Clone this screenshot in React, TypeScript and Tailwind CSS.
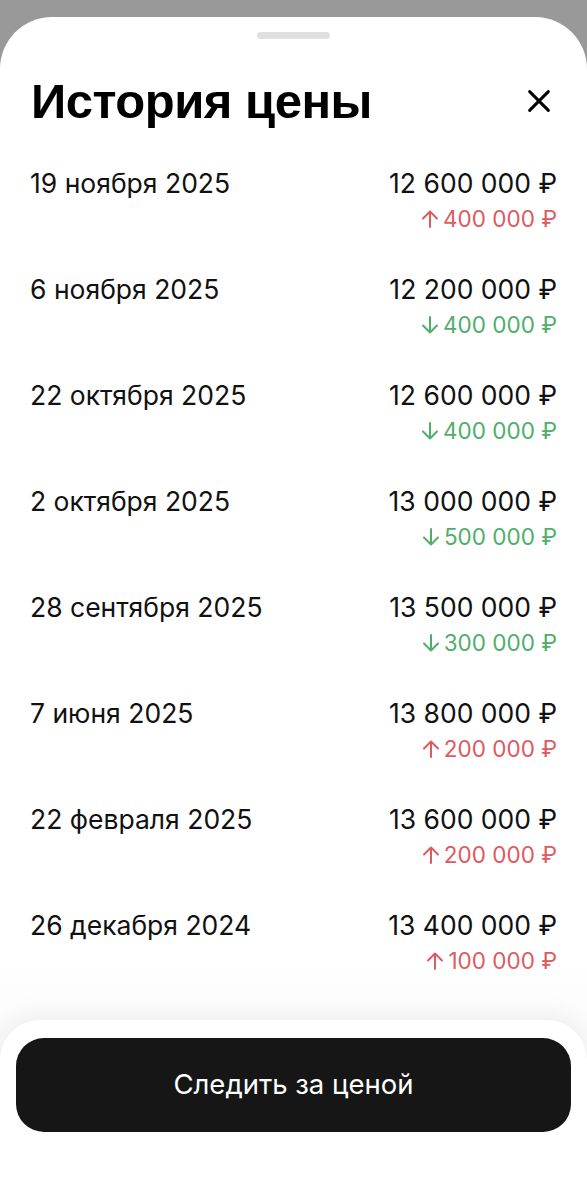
import React from 'react';

type Entry = {
  date: string;
  price: string;
  delta: string;
  up: boolean;
};

const history: Entry[] = [
  { date: '19 ноября 2025', price: '12 600 000 ₽', delta: '400 000 ₽', up: true },
  { date: '6 ноября 2025', price: '12 200 000 ₽', delta: '400 000 ₽', up: false },
  { date: '22 октября 2025', price: '12 600 000 ₽', delta: '400 000 ₽', up: false },
  { date: '2 октября 2025', price: '13 000 000 ₽', delta: '500 000 ₽', up: false },
  { date: '28 сентября 2025', price: '13 500 000 ₽', delta: '300 000 ₽', up: false },
  { date: '7 июня 2025', price: '13 800 000 ₽', delta: '200 000 ₽', up: true },
  { date: '22 февраля 2025', price: '13 600 000 ₽', delta: '200 000 ₽', up: true },
  { date: '26 декабря 2024', price: '13 400 000 ₽', delta: '100 000 ₽', up: true },
];

function Arrow({ up }: { up: boolean }) {
  return (
    <svg
      viewBox="0 0 20 20"
      className={up ? 'w-[20px] h-[20px]' : 'w-[20px] h-[20px] rotate-180'}
      fill="none"
      stroke="currentColor"
      strokeWidth={2}
      strokeLinecap="round"
      strokeLinejoin="round"
    >
      <path d="M10 18V2.5M3 9.5L10 2.5L17 9.5" />
    </svg>
  );
}

function Row({ entry }: { entry: Entry }) {
  return (
    <div className="flex justify-between h-[106px]">
      <div className="text-[26.5px] leading-[34px] text-[#111]">{entry.date}</div>
      <div className="flex flex-col items-end">
        <div className="text-[26.5px] leading-[34px] text-[#111]">{entry.price}</div>
        <div
          className={
            entry.up
              ? 'flex items-center gap-[3px] mt-[4px] text-[22.5px] leading-[30px] text-[#dc5a60]'
              : 'flex items-center gap-[3px] mt-[4px] text-[22.5px] leading-[30px] text-[#4fae6a]'
          }
        >
          <Arrow up={entry.up} />
          <span>{entry.delta}</span>
        </div>
      </div>
    </div>
  );
}

export default function App() {
  return (
    <div className="w-[587px] h-[1200px] bg-[#999999] pt-[17px] overflow-hidden font-['Inter',sans-serif]">
      <div className="relative h-[1183px] bg-white rounded-t-[52px] flex flex-col">
        {/* Handle */}
        <div className="flex justify-center pt-[15px]">
          <div className="w-[73px] h-[7px] rounded-full bg-[#e0e0e0]" />
        </div>

        {/* Header */}
        <div className="flex items-center justify-between pl-[31px] pr-[34px] mt-[34px]">
          <h1 className="text-[49px] leading-[56px] font-bold text-black tracking-[-0.5px] font-['Liberation_Sans',sans-serif]">
            История цены
          </h1>
          <svg viewBox="0 0 24 24" className="w-[28px] h-[28px] text-black" fill="none" stroke="currentColor" strokeWidth={2.6} strokeLinecap="round">
            <path d="M4 4L20 20M20 4L4 20" />
          </svg>
        </div>

        {/* List */}
        <div className="flex flex-col px-[30px] mt-[37px]">
          {history.map((e) => (
            <Row key={e.date} entry={e} />
          ))}
        </div>

        {/* Bottom action */}
        <div className="absolute left-0 right-0 bottom-0 h-[240px] bg-gradient-to-b from-white/0 via-[#f4f4f4]/60 to-transparent pointer-events-none" />
        <div className="absolute left-0 right-0 bottom-0 h-[180px] bg-white rounded-t-[40px] shadow-[0_-6px_24px_rgba(0,0,0,0.06)] px-[16px] pt-[18px]">
          <button className="w-full h-[94px] rounded-[28px] bg-[#161616] text-white text-[27.5px]">
            Следить за ценой
          </button>
        </div>
      </div>
    </div>
  );
}
